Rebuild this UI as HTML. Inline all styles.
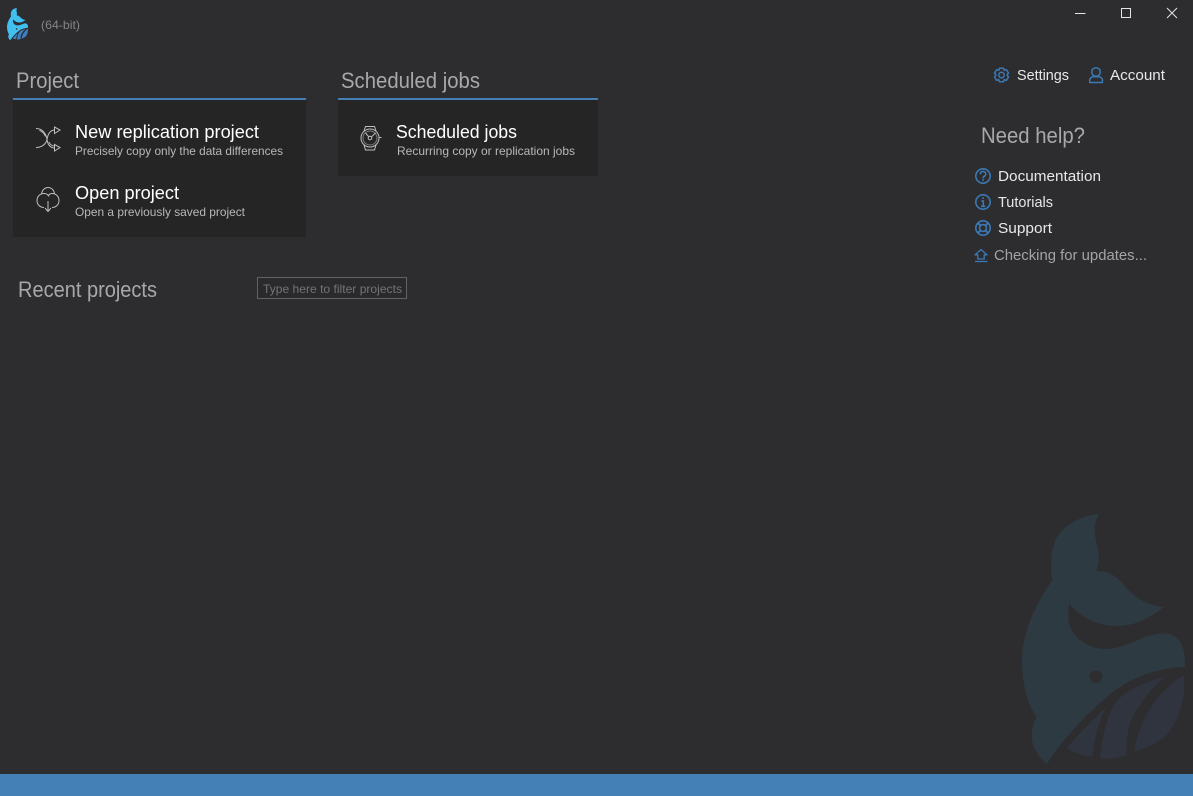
<!DOCTYPE html>
<html><head><meta charset="utf-8"><title>(64-bit)</title>
<style>
html,body{margin:0;padding:0;width:1193px;height:796px;overflow:hidden;background:#2d2d30}
svg{display:block}
text{font-family:"Liberation Sans",sans-serif}
.h{font-size:22px;fill:#a8a8a8}
.t{font-size:18px;fill:#fff}
.s{font-size:12px;fill:#b8b8b8}
.l{font-size:15px;fill:#e8e8e8}
</style></head><body>
<svg width="1193" height="796" viewBox="0 0 1193 796" xmlns="http://www.w3.org/2000/svg">
<rect width="1193" height="796" fill="#2d2d30"/>
<rect x="0" y="774" width="1193" height="22" fill="#4480b6"/>

<!-- big whale -->
<g transform="translate(1000 500) scale(.33333)">
<path fill="#2e3a42" d="M298 42C240 47 190 75 168 118C152 150 150 200 157 240C105 315 66 400 66 480C66 550 82 610 110 652C97 672 93 700 97 725C103 755 122 775 140 792C190 715 260 640 340 575C400 530 470 505 555 500C556 470 552 435 530 413C510 397 480 397 440 410C400 425 360 447 315 447C270 447 225 420 208 375C203 355 204 330 208 310C240 350 290 378 350 378C405 378 450 355 492 320C440 318 400 290 372 255C345 225 320 210 288 213C300 190 298 165 292 140C284 110 278 70 298 42Z"/>
<circle cx="288" cy="530" r="19" fill="#2d2d30"/>
<path fill="#2f343e" d="M200 745C235 705 280 655 317 623C295 670 282 720 277 770C250 767 222 759 200 745Z"/>
<path fill="#2f343e" d="M300 775C305 720 320 650 345 610C375 570 440 545 497 529C445 570 395 640 385 690C381 715 379 745 378 765C350 775 325 777 300 775Z"/>
<path fill="#2f343e" d="M403 755C412 680 460 580 552 525C556 570 550 640 505 700C480 725 440 745 403 755Z"/>
</g>

<!-- small logo -->
<g transform="translate(4.2 6.2) scale(.043)">
<path fill="#41c0f0" d="M298 42C240 47 190 75 168 118C152 150 150 200 157 240C105 315 66 400 66 480C66 550 82 610 110 652C97 672 93 700 97 725C103 755 122 775 140 792C190 715 260 640 340 575C400 530 470 505 555 500C556 470 552 435 530 413C510 397 480 397 440 410C400 425 360 447 315 447C270 447 225 420 208 375C203 355 204 330 208 310C240 350 290 378 350 378C405 378 450 355 492 320C440 318 400 290 372 255C345 225 320 210 288 213C300 190 298 165 292 140C284 110 278 70 298 42Z"/>
<circle cx="288" cy="530" r="19" fill="#2d2d30"/>
<path fill="#3f7fc0" d="M200 745C235 705 280 655 317 623C295 670 282 720 277 770C250 767 222 759 200 745Z"/>
<path fill="#3f7fc0" d="M300 775C305 720 320 650 345 610C375 570 440 545 497 529C445 570 395 640 385 690C381 715 379 745 378 765C350 775 325 777 300 775Z"/>
<path fill="#3f7fc0" d="M403 755C412 680 460 580 552 525C556 570 550 640 505 700C480 725 440 745 403 755Z"/>
</g>
<text x="41" y="29" font-size="12" fill="#858585" textLength="39" lengthAdjust="spacingAndGlyphs">(64-bit)</text>

<!-- window controls -->
<g fill="none" stroke="#e6e6e6" stroke-width="1">
<path d="M1075 13.5H1085.5"/>
<rect x="1121.5" y="8.5" width="9" height="9"/>
<path d="M1167 8L1177 18M1177 8L1167 18"/>
</g>

<!-- project -->
<text x="16" y="88" class="h" textLength="63" lengthAdjust="spacingAndGlyphs">Project</text>
<rect x="13" y="100" width="293" height="137" fill="#252526"/>
<rect x="13" y="98" width="293" height="2" fill="#4480b6"/>
<g fill="none" stroke="#bdbdbd" stroke-width="1">
<path d="M36 128.500C42 128.500 46 133 47 139.500C48 146 51 148 55 148"/>
<path d="M36 147.500C42 147.500 46 144 47 139.500C48 133 51 130 55 130"/>
<path d="M39.500 130.500C43 131.500 44.500 134 45.500 136.500"/>
<path d="M49 142C50 144.500 52 146 55 146"/>
<path d="M54.500 127L60 130L54.500 133.500V127Z"/>
<path d="M54.500 144.500L60 147.500L54.500 151V144.500Z"/>
</g>
<g fill="none" stroke="#bdbdbd" stroke-width="1">
<path d="M44 207.500C40 207.500 37 204.500 37 200.500C37 196.500 40 193.500 44 193.500C46 193.500 48 194.500 49 196.500"/>
<path d="M52 207.500C56 207.500 59 204.500 59 200.500C59 196.500 56 193.500 52 193.500C50 193.500 49 194.500 48 196"/>
<path d="M41.500 194C42 190 45 187.500 48 187.500C51.500 187.500 54 190 54.500 194"/>
<path d="M48 201V211M45 208L48 211.500L51 208"/>
</g>
<text x="75" y="138" class="t" textLength="184" lengthAdjust="spacingAndGlyphs">New replication project</text>
<text x="75" y="155" class="s" textLength="208" lengthAdjust="spacingAndGlyphs">Precisely copy only the data differences</text>
<text x="75" y="199" class="t" textLength="104" lengthAdjust="spacingAndGlyphs">Open project</text>
<text x="75" y="216" class="s" textLength="170" lengthAdjust="spacingAndGlyphs">Open a previously saved project</text>

<!-- scheduled -->
<text x="341" y="88" class="h" textLength="139" lengthAdjust="spacingAndGlyphs">Scheduled jobs</text>
<rect x="338" y="100" width="260" height="76" fill="#252526"/>
<rect x="338" y="98" width="260" height="2" fill="#4480b6"/>
<g fill="none" stroke="#bdbdbd" stroke-width="1">
<circle cx="370" cy="138" r="9"/>
<circle cx="370" cy="138" r="7" stroke="#7c7c7c"/>
<path d="M364 131L365.500 126.500H374.500L376 131M364 145L365.500 150H374.500L376 145"/>
<path d="M365.500 133L368.800 136.800M375.500 133L371.500 136.800"/>
<circle cx="370" cy="138" r="1.800"/>
<path d="M379.500 137.500H381.500"/>
</g>
<text x="396" y="138" class="t" textLength="121" lengthAdjust="spacingAndGlyphs">Scheduled jobs</text>
<text x="397" y="155" class="s" textLength="178" lengthAdjust="spacingAndGlyphs">Recurring copy or replication jobs</text>

<!-- recent -->
<text x="18" y="297" class="h" textLength="139" lengthAdjust="spacingAndGlyphs">Recent projects</text>
<rect x="257.500" y="277.500" width="149" height="21" fill="#2a2a2c" stroke="#626262"/>
<text x="263" y="293" font-size="12" fill="#747474" textLength="139" lengthAdjust="spacingAndGlyphs">Type here to filter projects</text>

<!-- settings / account -->
<g fill="none" stroke="#3b79b4" stroke-width="1.500">
<path d="M999.500 68.300L1003.500 68.300L1004.200 70.300L1006.300 69.600L1008.500 73L1007 75L1008.500 77L1006.500 80.400L1004.200 79.600L1003.500 81.800H999.500L998.800 79.600L996.500 80.400L994.500 77L996 75L994.500 73L996.700 69.600L998.800 70.300Z" stroke-linejoin="round"/>
<circle cx="1001.500" cy="75" r="2.700"/>
<circle cx="1096" cy="72" r="4.300"/>
<path d="M1089.700 82.500V80.500C1089.700 78 1092 76.800 1093.500 76.800H1098.500C1100.500 76.800 1102.400 78 1102.400 80.500V82.500Z"/>
</g>
<text x="1017" y="80" class="l" textLength="52" lengthAdjust="spacingAndGlyphs">Settings</text>
<text x="1110" y="80" class="l" textLength="55" lengthAdjust="spacingAndGlyphs">Account</text>

<!-- help -->
<text x="981" y="143" class="h" textLength="104" lengthAdjust="spacingAndGlyphs">Need help?</text>
<g fill="none" stroke="#3b79b4" stroke-width="1.600">
<circle cx="983" cy="176" r="7.200"/>
<path d="M980.300 174.200C980.300 170.500 985.800 170.500 985.800 174.200C985.800 176.200 983 176.200 983 178.400"/>
<path d="M983 179.300V181"/>
<circle cx="983" cy="202" r="7.200"/>
<path d="M983 197.300V199M981.300 201H983.300V206M981 206.300H985.300"/>
<circle cx="983" cy="228" r="7.200"/>
<circle cx="983" cy="228" r="3.400"/>
<path d="M977.800 222.800L980.600 225.600M988.200 222.800L985.400 225.600M977.800 233.200L980.600 230.400M988.200 233.200L985.400 230.400" stroke-width="2"/>
<path d="M981 249.500L987 254.800H984.200V259H977.800V254.800H975Z" stroke-linejoin="round" stroke-width="1.300"/>
<path d="M975 261.500H987.500" stroke-width="1.300"/>
</g>
<text x="998" y="181" class="l" textLength="103" lengthAdjust="spacingAndGlyphs">Documentation</text>
<text x="998" y="207" class="l" textLength="55" lengthAdjust="spacingAndGlyphs">Tutorials</text>
<text x="998" y="233" class="l" textLength="54" lengthAdjust="spacingAndGlyphs">Support</text>
<text x="994" y="260" class="l" style="fill:#a4a4a4" textLength="153" lengthAdjust="spacingAndGlyphs">Checking for updates...</text>
</svg>
</body></html>
